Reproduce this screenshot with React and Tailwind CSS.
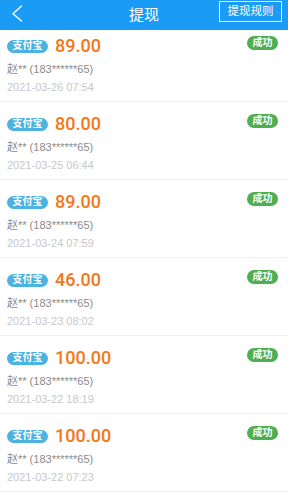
const records = [
  { amount: '89.00', time: '2021-03-26 07:54' },
  { amount: '80.00', time: '2021-03-25 06:44' },
  { amount: '89.00', time: '2021-03-24 07:59' },
  { amount: '46.00', time: '2021-03-23 08:02' },
  { amount: '100.00', time: '2021-03-22 18:19' },
  { amount: '100.00', time: '2021-03-22 07:23' },
];

function Row({ item, first }) {
  return (
    <div className={`border-b border-[#f0f0f0] px-[7px] pb-[6px] ${first ? 'pt-[6px]' : 'pt-[12px]'}`}>
      <div className="flex h-[20px] items-center">
        <span className="flex h-[13px] w-[41px] items-center justify-center rounded-full bg-[#4ab3e2] text-[10px] leading-none font-bold text-white">
          支付宝
        </span>
        <span className="ml-[7px] font-['Roboto',sans-serif] text-[18px] leading-none font-medium text-[#f5761a]">{item.amount}</span>
        <span className="ml-auto mr-[3px] flex h-[14px] w-[31px] -translate-y-[3px] items-center justify-center rounded-full bg-[#4fae4f] text-[10px] leading-none font-bold text-white">
          成功
        </span>
      </div>
      <div className="mt-[5px] h-[16px] text-[11px] leading-[16px] text-[#8a8a8a]">赵** (183******65)</div>
      <div className="mt-[2px] h-[16px] text-[11px] leading-[16px] text-[#c8c8c8]">{item.time}</div>
    </div>
  );
}

export default function App() {
  return (
    <div className="h-[497px] w-[288px] overflow-hidden bg-white font-['Liberation_Sans','Noto_Sans_CJK_SC',sans-serif]">
      <div className="relative flex h-[30px] items-center justify-center bg-[#1a9cf6]">
        <svg className="absolute left-[10px] top-[4px]" width="14" height="20" viewBox="0 0 14 20" fill="none">
          <polyline points="11.5,2 3,9.7 11.5,17" stroke="white" strokeWidth="1.4" strokeLinecap="round" strokeLinejoin="round" />
        </svg>
        <span className="text-[15px] text-white">提现</span>
        <span className="absolute right-[6px] top-[1px] flex h-[21px] w-[63px] items-center justify-center border border-white text-[11.5px] text-white">
          提现规则
        </span>
      </div>
      {records.map((r, i) => (
        <Row key={i} item={r} first={i === 0} />
      ))}
    </div>
  );
}
